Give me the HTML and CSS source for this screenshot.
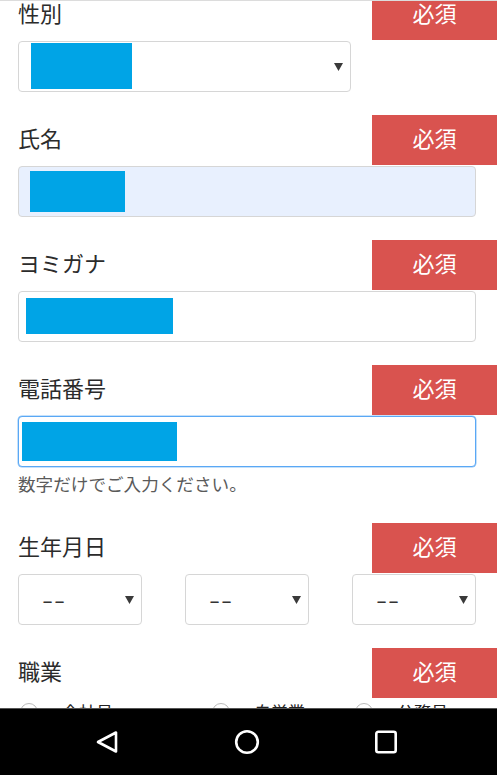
FILE: index.html
```html
<!DOCTYPE html>
<html lang="ja">
<head>
<meta charset="utf-8">
<title>Form</title>
<link rel="stylesheet" href="styles.css">
</head>
<body>
<div class="topline"></div>
<main class="form">
  <section class="field field-first">
    <div class="field-head"><span class="field-label">性別</span><span class="badge">必須</span></div>
    <div class="control select select-wide">
      <span class="mask mask-gender"></span>
      <svg class="caret" viewBox="0 0 9 8" width="9" height="8"><path d="M0 0H9L4.5 8Z"/></svg>
    </div>
  </section>

  <section class="field">
    <div class="field-head"><span class="field-label">氏名</span><span class="badge">必須</span></div>
    <div class="control input input-autofill"><span class="mask mask-name"></span></div>
  </section>

  <section class="field">
    <div class="field-head"><span class="field-label">ヨミガナ</span><span class="badge">必須</span></div>
    <div class="control input"><span class="mask mask-kana"></span></div>
  </section>

  <section class="field">
    <div class="field-head"><span class="field-label">電話番号</span><span class="badge">必須</span></div>
    <div class="control input input-focus"><span class="mask mask-tel"></span></div>
    <p class="help">数字だけでご入力ください。</p>
  </section>

  <section class="field">
    <div class="field-head"><span class="field-label">生年月日</span><span class="badge">必須</span></div>
    <div class="date-row">
      <div class="control select select-small"><span class="dash">--</span><svg class="caret" viewBox="0 0 9 8" width="9" height="8"><path d="M0 0H9L4.5 8Z"/></svg></div>
      <div class="control select select-small"><span class="dash">--</span><svg class="caret" viewBox="0 0 9 8" width="9" height="8"><path d="M0 0H9L4.5 8Z"/></svg></div>
      <div class="control select select-small"><span class="dash">--</span><svg class="caret" viewBox="0 0 9 8" width="9" height="8"><path d="M0 0H9L4.5 8Z"/></svg></div>
    </div>
  </section>

  <section class="field">
    <div class="field-head"><span class="field-label">職業</span><span class="badge">必須</span></div>
    <div class="radio-row">
      <label class="radio radio-a"><span class="radio-dot"></span><span>会社員</span></label>
      <label class="radio radio-b"><span class="radio-dot"></span><span>自営業</span></label>
      <label class="radio"><span class="radio-dot"></span><span>公務員</span></label>
    </div>
  </section>
</main>

<nav class="navbar">
  <svg class="nav-icon" viewBox="0 0 28 28" width="28" height="28"><path d="M4 14L22 4.5V23.5Z" fill="none" stroke="#fff" stroke-width="2.6" stroke-linejoin="round"/></svg>
  <svg class="nav-icon" viewBox="0 0 28 28" width="28" height="28"><circle cx="14" cy="14" r="10.8" fill="none" stroke="#fff" stroke-width="2.6"/></svg>
  <svg class="nav-icon" viewBox="0 0 28 28" width="28" height="28"><rect x="4.3" y="3.8" width="19.4" height="20.4" rx="2" fill="none" stroke="#fff" stroke-width="2.6"/></svg>
</nav>
</body>
</html>
```

FILE: styles.css
```css
* {
  box-sizing: border-box;
}

html, body {
  margin: 0;
  padding: 0;
  background: #fff;
}

body {
  width: 497px;
  height: 775px;
  overflow: hidden;
  font-family: "Noto Sans CJK JP", "Noto Sans", sans-serif;
  color: #2b2b2b;
}

.topline {
  position: fixed;
  top: 0;
  left: 0;
  right: 0;
  height: 1px;
  background: #dcdcdc;
  z-index: 5;
}

.form {
  padding-left: 18px;
}

.field {
  margin-bottom: 23px;
}

.field-first {
  margin-top: -10px;
}

.field-head {
  display: flex;
  justify-content: space-between;
  align-items: center;
  height: 50px;
  margin-bottom: 1px;
}

.field-label {
  font-size: 22px;
  line-height: 1;
  color: #2b2b2b;
  padding-bottom: 7px;
}

.badge {
  width: 125px;
  height: 50px;
  background: #d9534f;
  color: #fff;
  font-size: 22px;
  line-height: 1;
  display: flex;
  align-items: center;
  justify-content: center;
  padding-bottom: 6px;
}

.control {
  height: 51px;
  border: 1px solid #d6d6d6;
  border-radius: 4px;
  background: #fff;
  display: flex;
  align-items: flex-start;
  position: relative;
}

.input {
  width: 458px;
}

.input-autofill {
  background: #e8f0fe;
}

.input-focus {
  border: 1px solid #5aa8f5;
  box-shadow: 0 0 0 0.5px #8cc3f7;
}

.select {
  align-items: center;
  justify-content: space-between;
  padding-right: 7px;
}

.select-wide {
  width: 333px;
}

.select-small {
  width: 124px;
}

.caret {
  fill: #3a3a3a;
  flex: none;
}

.select-wide .caret {
  margin-left: auto;
}

.mask {
  display: block;
  background: #00a4e6;
  flex: none;
}

.mask-gender {
  width: 101px;
  height: 46px;
  margin-left: 12px;
  align-self: flex-start;
  margin-top: 1px;
}

.mask-name {
  width: 95px;
  height: 41px;
  margin-left: 11px;
  margin-top: 4px;
}

.mask-kana {
  width: 147px;
  height: 36px;
  margin-left: 7px;
  margin-top: 6px;
}

.mask-tel {
  width: 155px;
  height: 39px;
  margin-left: 3px;
  margin-top: 5px;
}

.help {
  margin: 0;
  height: 33px;
  font-size: 17.6px;
  line-height: 33px;
  color: #5a5a5a;
}

.date-row {
  display: flex;
  justify-content: space-between;
  width: 458px;
}

.dash {
  font-size: 20px;
  letter-spacing: 0.5px;
  color: #333;
  margin-left: 23px;
  display: inline-block;
  transform: scaleX(1.6);
  transform-origin: left center;
  font-family: "Noto Sans CJK JP", sans-serif;
}

.radio-row {
  display: flex;
  margin-top: 5px;
}

.radio {
  display: flex;
  align-items: flex-start;
  gap: 24px;
  font-size: 17px;
  line-height: 18px;
  color: #222;
  width: 143px;
}

.radio-a {
  width: 192px;
}

.radio-dot {
  width: 18px;
  height: 18px;
  border: 1px solid #bbb;
  border-radius: 50%;
  margin-left: 2px;
  flex: none;
}

.navbar {
  position: fixed;
  left: 0;
  right: 0;
  bottom: 0;
  height: 67px;
  background: #000;
  border-top: 1px solid #555;
  display: flex;
  align-items: center;
  justify-content: center;
  gap: 111px;
  padding-right: 4px;
  z-index: 10;
}

.nav-icon {
  display: block;
}
```
